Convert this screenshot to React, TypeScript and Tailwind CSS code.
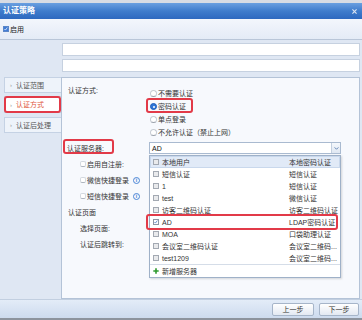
import React from "react";

function Check({ checked = false, blue = false }: { checked?: boolean; blue?: boolean }) {
  return (
    <span
      className={
        "relative inline-block w-[6px] h-[6px] shrink-0 border " +
        (blue ? "border-[#5b86c6] bg-[#3f7bd6]" : checked ? "border-[#8d96a3] bg-white" : "border-[#a3a9b2] bg-[#e9eaec]")
      }
    >
      {(checked || blue) && (
        <svg viewBox="0 0 6 6" className="absolute left-0 top-0 w-[4px] h-[4px]" style={{ overflow: "visible" }}>
          <path d="M0.6 3 L2.2 4.6 L5 0.8" fill="none" stroke={blue ? "#ffffff" : "#3a6fc0"} strokeWidth="1.1" />
        </svg>
      )}
    </span>
  );
}

function SoftCheck() {
  return <span className="inline-block w-[6px] h-[6px] shrink-0 rounded-[2px] border border-[#d3d8df] border-b-[#aeb5bf] bg-white" />;
}

function Radio({ on = false }: { on?: boolean }) {
  return on ? (
    <span className="inline-flex items-center justify-center w-[7px] h-[7px] rounded-full bg-[#2f76d9] border border-[#1f5eb8] shrink-0">
      <span className="w-[2px] h-[2px] rounded-full bg-white" />
    </span>
  ) : (
    <span className="inline-block w-[7px] h-[7px] rounded-full bg-white border border-[#c7ccd3] border-b-[#9aa1ab] shrink-0" />
  );
}

function Info() {
  return (
    <span className="inline-flex items-center justify-center w-[7px] h-[7px] rounded-full border border-[#4a86d6] text-[#3a78cf] text-[5px] font-bold leading-none">
      i
    </span>
  );
}

const rows: [string, string, boolean][] = [
  ["短信认证", "短信认证", false],
  ["1", "短信认证", false],
  ["test", "微信认证", false],
  ["访客二维码认证", "访客二维码认证", false],
  ["AD", "LDAP密码认证", true],
  ["MOA", "口袋助理认证", false],
  ["会议室二维码认证", "会议室二维码...", false],
  ["test1209", "会议室二维码...", false],
];

export default function App() {
  return (
    <div className="relative w-[362px] h-[320px] overflow-hidden bg-[#dfe7f3] text-[7px] leading-none text-[#333] font-['Liberation_Sans','Noto_Sans_CJK_SC',sans-serif] flex flex-col">
      <div className="h-[3px] bg-[#d8dce4]" />
      <div className="h-[16px] bg-linear-to-b from-[#6a9fe0] via-[#3f7ccc] to-[#2d68bf] flex items-center justify-between pl-[3px] pr-[5px]">
        <span className="text-white text-[8px] font-bold">认证策略</span>
        <svg viewBox="0 0 6 6" className="w-[5px] h-[5px]">
          <path d="M0.5 0.5 L5.5 5.5 M5.5 0.5 L0.5 5.5" stroke="#d9e3f2" strokeWidth="1.4" />
        </svg>
      </div>
      <div className="h-[21px] bg-linear-to-b from-[#f3f6fc] to-[#e4ebf6] border-b border-[#b9c6d8] flex items-center pl-[3px] gap-[1px]">
        <Check blue />
        <span className="text-[#222]">启用</span>
      </div>
      <div className="pl-[62px] pr-[2px] pt-[3px] flex flex-col gap-[3px]">
        <div className="h-[13px] bg-white border border-[#c6d1e0]" />
        <div className="h-[13px] bg-white border border-[#c6d1e0]" />
      </div>
      <div className="mt-[5px] flex h-[222px]">
        <div className="w-[61px] pl-[4px] flex flex-col">
          <div className="h-[16px] bg-[#eef3fa] border border-[#c5d2e4] border-r-0 flex items-center pl-[5px] gap-[4px] text-[#555]">
            <span className="text-[#999] text-[6px]">›</span>认证范围
          </div>
          <div className="mt-[3px] h-[17px] bg-white border border-[#c5d2e4] border-r-0 flex items-center pl-[5px] gap-[4px] text-[#e0563a]">
            <span className="text-[#999] text-[6px]">›</span>认证方式
          </div>
          <div className="mt-[4px] h-[16px] bg-[#eef3fa] border border-[#c5d2e4] border-r-0 flex items-center pl-[5px] gap-[4px] text-[#555]">
            <span className="text-[#999] text-[6px]">›</span>认证后处理
          </div>
        </div>
        <div className="flex-1 mr-[2px] bg-[#f7f9fd] border border-[#b4c3d7] relative">
          <div className="flex mt-[6px]">
            <div className="w-[87px] pl-[6px] h-[12px] flex items-center">认证方式:</div>
            <div className="flex flex-col mt-[3px]">
              {[
                ["不需要认证", false],
                ["密码认证", true],
                ["单点登录", false],
                ["不允许认证（禁止上网）", false],
              ].map(([t, on]) => (
                <div key={t as string} className="h-[13px] flex items-center gap-[1px] pl-[1px]">
                  <Radio on={on as boolean} />
                  <span>{t as string}</span>
                </div>
              ))}
            </div>
          </div>
          <div className="flex mt-[3px] items-center h-[12px]">
            <div className="w-[87px] pl-[5px]">认证服务器:</div>
            <div className="w-[192px] h-[12px] bg-white border border-[#a9bad0] flex items-center">
              <span className="flex-1 pl-[2px] text-[#111]">AD</span>
              <span className="w-[9px] h-full border-l border-[#c3cfdf] bg-linear-to-b from-[#f5f8fc] to-[#dfe7f2] flex items-center justify-center">
                <svg viewBox="0 0 6 4" className="w-[5px] h-[3px]">
                  <path d="M0.5 0.5 L3 3 L5.5 0.5" fill="none" stroke="#4b72a8" strokeWidth="1.1" />
                </svg>
              </span>
            </div>
          </div>
          <div className="flex flex-col w-[87px] mt-[2px]">
            <div className="h-[16px] flex items-center pl-[18px] gap-[1px]">
              <SoftCheck />
              <span>启用自注册:</span>
            </div>
            <div className="h-[16px] flex items-center pl-[18px] gap-[1px]">
              <SoftCheck />
              <span>微信快捷登录</span>
              <span className="ml-[3px]">
                <Info />
              </span>
            </div>
            <div className="h-[16px] flex items-center pl-[18px] gap-[1px]">
              <SoftCheck />
              <span>短信快捷登录</span>
              <span className="ml-[3px]">
                <Info />
              </span>
            </div>
            <div className="h-[16px] flex items-center pl-[6px]">认证页面</div>
            <div className="h-[16px] flex items-center pl-[18px]">选择页面:</div>
            <div className="h-[16px] flex items-center pl-[18px]">认证后跳转到:</div>
          </div>

          <div className="absolute left-[87px] top-[77px] w-[192px] bg-white border border-[#9fb1c8] shadow-[1px_1px_2px_rgba(0,0,0,0.15)] flex flex-col">
            <div className="h-[12px] flex items-center pl-[2px] bg-[#e1eaf7] border border-[#c9d8ec]">
              <div className="w-[136px] flex items-center gap-[3px]">
                <Check />
                <span>本地用户</span>
              </div>
              <span>本地密码认证</span>
            </div>
            {rows.map(([a, b, c]) => (
              <div key={a} className="h-[12px] flex items-center pl-[3px]">
                <div className="w-[136px] flex items-center gap-[3px]">
                  <Check checked={c} />
                  <span>{a}</span>
                </div>
                <span>{b}</span>
              </div>
            ))}
            <div className="h-[13px] border-t border-[#d5dde8] flex items-center pl-[3px] gap-[3px]">
              <svg viewBox="0 0 6 6" className="w-[6px] h-[6px]">
                <path d="M3 0.3 V5.7 M0.3 3 H5.7" stroke="#2e9a2e" strokeWidth="1.6" />
              </svg>
              <span>新增服务器</span>
            </div>
          </div>
        </div>
      </div>
      <div className="flex-1 bg-linear-to-b from-[#e3ecf8] to-[#cddbee] border-t border-[#c2cfe0] border-b-2 border-b-[#8d949e] flex items-center justify-end gap-[5px] pr-[3px]">
        <div className="w-[42px] h-[13px] rounded-[2px] border border-[#a6b5c9] bg-linear-to-b from-white to-[#e3e9f2] flex items-center justify-center">上一步</div>
        <div className="w-[40px] h-[13px] rounded-[2px] border border-[#a6b5c9] bg-linear-to-b from-white to-[#e3e9f2] flex items-center justify-center">下一步</div>
      </div>

      <div className="absolute left-[4px] top-[96px] w-[57px] h-[17px] border-2 border-[#e23a48] rounded-[3px]" />
      <div className="absolute left-[146px] top-[98px] w-[47px] h-[15px] border-2 border-[#e23a48] rounded-[3px]" />
      <div className="absolute left-[63px] top-[139px] w-[51px] h-[15px] border-2 border-[#e23a48] rounded-[3px]" />
      <div className="absolute left-[146px] top-[214px] w-[192px] h-[16px] border-2 border-[#e23a48] rounded-[3px]" />
    </div>
  );
}
